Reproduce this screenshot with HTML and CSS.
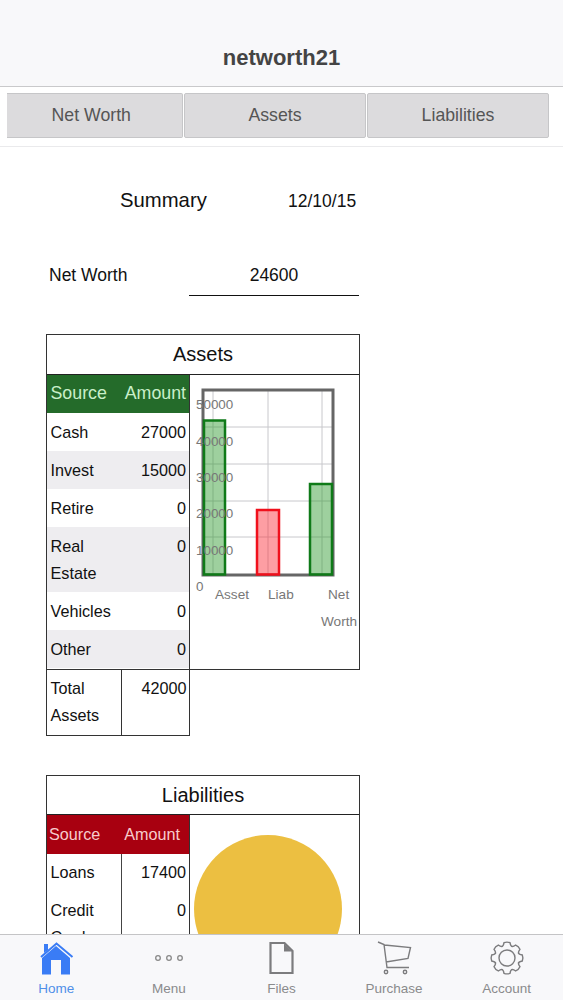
FILE: index.html
```html
<!DOCTYPE html>
<html lang="en">
<head>
<meta charset="utf-8">
<title>networth21</title>
<link rel="stylesheet" href="styles.css">
</head>
<body>
<div class="app">
  <header class="title-bar">networth21</header>
  <nav class="tabs">
    <button class="tab tab-first">Net Worth</button>
    <button class="tab">Assets</button>
    <button class="tab">Liabilities</button>
  </nav>
  <main class="content">
    <div class="summary-row">
      <span class="summary-title">Summary</span>
      <span class="summary-date">12/10/15</span>
    </div>
    <div class="worth-row">
      <span class="worth-label">Net Worth</span>
      <span class="worth-value">24600</span>
    </div>

    <section class="card">
      <h2 class="card-title">Assets</h2>
      <div class="card-body">
        <div class="ledger">
          <div class="row head head-green"><span>Source</span><span>Amount</span></div>
          <div class="row"><span class="name">Cash</span><span>27000</span></div>
          <div class="row alt"><span class="name">Invest</span><span>15000</span></div>
          <div class="row"><span class="name">Retire</span><span>0</span></div>
          <div class="row alt"><span class="name">Real Estate</span><span>0</span></div>
          <div class="row"><span class="name">Vehicles</span><span>0</span></div>
          <div class="row alt"><span class="name">Other</span><span>0</span></div>
        </div>
        <div class="chart-cell">
          <svg class="chart" viewBox="190 375 169 294" width="169" height="294" aria-label="Bar chart">
            <g class="grid">
              <path d="M203 427H332M203 464H332M203 501H332M203 537H332M213 390V574M268 390V574M322 390V574"/>
            </g>
            <rect class="frame" x="203" y="390" width="130" height="185"/>
            <rect class="bar-green" x="204" y="420.500" width="21" height="154"/>
            <rect class="bar-red" x="257" y="510" width="22" height="64.500"/>
            <rect class="bar-green" x="310" y="484" width="22" height="90.500"/>
            <g class="tick">
              <text x="196" y="409">50000</text>
              <text x="196" y="446">40000</text>
              <text x="196" y="482">30000</text>
              <text x="196" y="518">20000</text>
              <text x="196" y="555">10000</text>
              <text x="196" y="591">0</text>
            </g>
            <g class="axis">
              <text x="215" y="599">Asset</text>
              <text x="268" y="599">Liab</text>
              <text x="328" y="599">Net</text>
              <text x="321" y="626">Worth</text>
            </g>
          </svg>
        </div>
      </div>
    </section>
    <div class="total">
      <span class="total-name">Total Assets</span>
      <span class="total-value">42000</span>
    </div>

    <section class="card card-liab">
      <h2 class="card-title">Liabilities</h2>
      <div class="card-body">
        <div class="ledger">
          <div class="row head head-red"><span>Source</span><span>Amount</span></div>
          <div class="row ruled"><span class="name">Loans</span><span>17400</span></div>
          <div class="row ruled"><span class="name">Credit Cards</span><span>0</span></div>
        </div>
        <div class="pie-cell"><div class="pie"></div></div>
      </div>
    </section>
  </main>
  <footer class="tabbar">
    <div class="item active">
      <svg class="icon" viewBox="34 940 44 36" width="44" height="36">
        <path class="home-fill" d="M42 958L56 946L70 958V974.500H61V960H51V974.500H42Z"/>
        <path class="home-roof" d="M41 957L56.500 943.500L72.500 957"/>
        <path class="home-fill" d="M44 944H48V950L44 953Z"/>
      </svg>
      <span>Home</span>
    </div>
    <div class="item">
      <svg class="icon" viewBox="147 940 44 36" width="44" height="36">
        <circle class="dot" cx="158" cy="958" r="2.300"/>
        <circle class="dot" cx="169" cy="958" r="2.300"/>
        <circle class="dot" cx="180" cy="958" r="2.300"/>
      </svg>
      <span>Menu</span>
    </div>
    <div class="item">
      <svg class="icon" viewBox="259.500 940 44 36" width="44" height="36">
        <path class="line-thick" d="M271 943H285L293 951V973H271Z"/>
        <path class="fold" d="M284.500 943.500V951.500H292.500Z"/>
      </svg>
      <span>Files</span>
    </div>
    <div class="item">
      <svg class="icon" viewBox="372 940 44 36" width="44" height="36">
        <path class="line" d="M378 942L384 944.500L387 967.500H409M384.500 945L410.500 947.500L408 958.500L386 962"/>
        <circle class="line" cx="386" cy="972" r="1.700"/>
        <circle class="line" cx="405" cy="972" r="1.700"/>
      </svg>
      <span>Purchase</span>
    </div>
    <div class="item">
      <svg class="icon" viewBox="-22 -18 44 36" width="44" height="36">
        <defs>
          <path id="tooth" d="M-5.200 -11.400Q-3.500 -11.800 -3 -15.300Q0 -16.500 3 -15.300Q3.500 -11.800 5.200 -11.400"/>
        </defs>
        <g class="line">
          <use href="#tooth"/>
          <use href="#tooth" transform="rotate(45)"/>
          <use href="#tooth" transform="rotate(90)"/>
          <use href="#tooth" transform="rotate(135)"/>
          <use href="#tooth" transform="rotate(180)"/>
          <use href="#tooth" transform="rotate(225)"/>
          <use href="#tooth" transform="rotate(270)"/>
          <use href="#tooth" transform="rotate(315)"/>
          <circle cx="0" cy="0" r="8"/>
        </g>
      </svg>
      <span>Account</span>
    </div>
  </footer>
</div>
</body>
</html>
```
FILE: styles.css
```css
* { box-sizing: border-box; }
html, body { margin: 0; padding: 0; }
body {
  font-family: "Liberation Sans", Arial, sans-serif;
  color: #111;
  background: #fff;
}
.app {
  width: 563px;
  height: 1000px;
  display: flex;
  flex-direction: column;
  overflow: hidden;
}
.title-bar {
  height: 87px;
  flex: none;
  background: #f8f8fa;
  border-bottom: 1px solid #c9c9cb;
  padding-top: 44px;
  text-align: center;
  font-size: 22px;
  line-height: 28px;
  font-weight: bold;
  color: #444;
}
.tabs {
  height: 60px;
  flex: none;
  display: flex;
  gap: 1px;
  padding: 5.500px 14px 0 6.500px;
  border-bottom: 1px solid #eaeaec;
  background: #fff;
  align-items: flex-start;
}
.tab {
  flex: 0 0 182px;
  height: 45.500px;
  padding: 1px 0 0;
  background: #dcdbdd;
  border: 1.500px solid #c6c6c8;
  border-radius: 2px;
  font: 17.700px "Liberation Sans", Arial, sans-serif;
  color: #555;
}
.tab-first {
  flex-basis: 176.500px;
  border-left: 0;
  border-radius: 0 2px 2px 0;
  padding-right: 6px;
}
.content {
  flex: 1 1 0;
  min-height: 0;
  overflow: hidden;
  background: #fff;
}
.summary-row {
  display: flex;
  align-items: baseline;
  padding: 39px 0 0 120px;
  height: 97px;
}
.summary-title { font-size: 20.300px; line-height: 28px; width: 168px; }
.summary-date { font-size: 17.500px; line-height: 28px; }
.worth-row {
  display: flex;
  height: 52px;
  padding-left: 49px;
  font-size: 17.500px;
  line-height: 24px;
  padding-top: 19px;
}
.worth-label { width: 140px; }
.worth-value {
  width: 170px;
  height: 33px;
  text-align: center;
  border-bottom: 1.500px solid #111;
  margin-top: -0.500px;
}
.card {
  margin: 38px 0 0 46px;
  width: 314px;
  border: 1.500px solid #333;
}
.card-title {
  margin: 0;
  height: 39.500px;
  border-bottom: 1.500px solid #222;
  text-align: center;
  font-size: 20px;
  line-height: 38px;
  font-weight: normal;
}
.card-body { display: flex; }
.ledger {
  width: 143px;
  flex: none;
  border-right: 1.500px solid #333;
}
.row {
  display: flex;
  justify-content: space-between;
  padding: 5.500px 3px 5.500px 3.500px;
  font-size: 16.200px;
  line-height: 27px;
}
.alt { background: #eeedf0; }
.name { width: 68px; }
.head {
  height: 38.500px;
  font-size: 17.800px;
}
.head-green { background: #246b2a; color: #c9efc9; }
.head-red { background: #a80010; color: #f7cccc; font-size: 16.200px; padding-left: 2px; padding-right: 9px; }
.chart-cell { flex: 1; min-width: 0; }
.chart { display: block; }
.grid path { fill: none; stroke: #c8c8cc; stroke-width: 1; }
.frame { fill: none; stroke: #666; stroke-width: 3px; }
.bar-green { fill: rgba(40, 150, 40, 0.45); stroke: #0f7a18; stroke-width: 2.500px; }
.bar-red { fill: rgba(250, 40, 50, 0.45); stroke: #f0101c; stroke-width: 2.500px; }
.tick text { font-size: 13.400px; fill: #777; font-family: "Liberation Sans", Arial, sans-serif; }
.axis text { font-size: 13.600px; fill: #777; font-family: "Liberation Sans", Arial, sans-serif; }
.total {
  display: flex;
  margin-left: 46px;
  width: 144px;
  height: 66px;
  border: 1.500px solid #333;
  border-top: 0;
  font-size: 16.200px;
  line-height: 27px;
}
.total-name {
  width: 75px;
  padding: 5px 0 0 3.500px;
  border-right: 1.500px solid #333;
}
.total-value {
  flex: 1;
  text-align: right;
  padding: 5px 2.500px 0 0;
}
.card-liab { margin-top: 39px; }
.ruled { position: relative; }
.ruled::before {
  content: "";
  position: absolute;
  left: 73.500px;
  top: 0;
  bottom: 0;
  width: 1.500px;
  background: #444;
}
.pie-cell { flex: 1; padding: 20px 0 0 3.500px; }
.pie {
  width: 148px;
  height: 148px;
  border-radius: 50%;
  background: #ecbf41;
}
.tabbar {
  height: 66px;
  flex: none;
  display: flex;
  background: #f8f8fa;
  border-top: 1px solid #c4c4c6;
  padding-top: 5px;
}
.item {
  flex: 1 1 0;
  display: flex;
  flex-direction: column;
  align-items: center;
  font-size: 13.500px;
  line-height: 26px;
  color: #8a8a8c;
}
.icon { display: block; flex: none; }
.active { color: #4f8fe8; }
.home-fill { fill: #3a7cf5; }
.home-roof { fill: none; stroke: #3a7cf5; stroke-width: 2; }
.dot { fill: none; stroke: #888; stroke-width: 1.300px; }
.line, .line use, .line circle { fill: none; stroke: #7c7c7e; stroke-width: 1.400px; }
.line-thick { fill: none; stroke: #7c7c7e; stroke-width: 2.200px; }
.fold { fill: #7c7c7e; }
```
